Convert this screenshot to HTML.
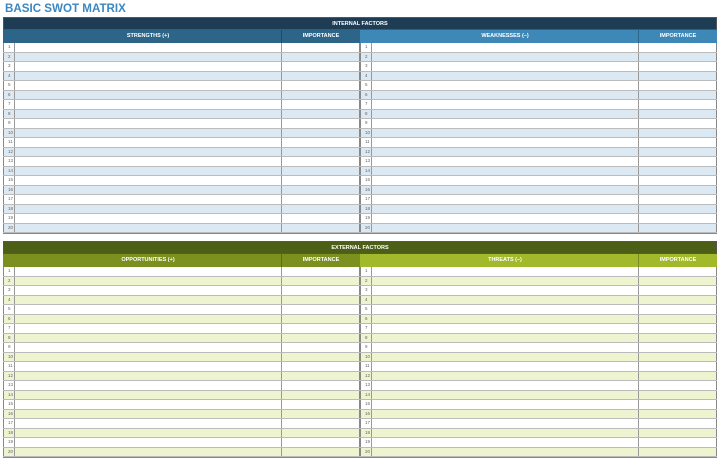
<!DOCTYPE html>
<html><head><meta charset="utf-8"><style>
*{margin:0;padding:0;box-sizing:border-box}
body{width:720px;height:462px;background:#fff;font-family:"Liberation Sans",Arial,sans-serif;position:relative;overflow:hidden}
h1{position:absolute;left:5px;top:2px;font-size:11.6px;color:#3b87c1;font-weight:bold}
.hdr{position:absolute;left:3px;width:714px;height:13px;color:#fff;font-size:5.5px;font-weight:bold;text-align:center;line-height:13px;border:1px solid #555}
.t{position:absolute;width:357px}
.sh{height:13px;display:flex;color:#fff;font-size:5.5px;font-weight:bold;line-height:13px;text-align:center}
.sh .a{flex:0 0 279px;border-right:1px solid rgba(0,0,0,.25)}
.sh .b{flex:1}
.r{height:9.5px;display:flex;border-bottom:1px solid #bbb;font-size:4.5px;color:#666;line-height:8.5px}
.r i{font-style:normal;flex:0 0 12px;border-left:1px solid #888;border-right:1px solid #999;padding-left:4px}
.r b{flex:0 0 267px;border-right:1px solid #999}
.r u{flex:1;border-right:1px solid #888}
.bl .r:nth-child(even){background:#dce9f3}
.gr .r:nth-child(even){background:#eef3d0}
.rows{border-bottom:1px solid #888}
</style></head><body>
<h1>BASIC SWOT MATRIX</h1>
<div class="hdr" style="top:17px;background:#1e3d55">INTERNAL FACTORS</div>
<div class="t" style="left:3px;top:30px"><div class="sh" style="background:#2c6587"><div class="a" style="flex-basis:279px;padding-left:12px">STRENGTHS (+)</div><div class="b">IMPORTANCE</div></div>
<div class="rows bl" id="a"><div class="r"><i>1</i><b></b><u></u></div><div class="r"><i>2</i><b></b><u></u></div><div class="r"><i>3</i><b></b><u></u></div><div class="r"><i>4</i><b></b><u></u></div><div class="r"><i>5</i><b></b><u></u></div><div class="r"><i>6</i><b></b><u></u></div><div class="r"><i>7</i><b></b><u></u></div><div class="r"><i>8</i><b></b><u></u></div><div class="r"><i>9</i><b></b><u></u></div><div class="r"><i>10</i><b></b><u></u></div><div class="r"><i>11</i><b></b><u></u></div><div class="r"><i>12</i><b></b><u></u></div><div class="r"><i>13</i><b></b><u></u></div><div class="r"><i>14</i><b></b><u></u></div><div class="r"><i>15</i><b></b><u></u></div><div class="r"><i>16</i><b></b><u></u></div><div class="r"><i>17</i><b></b><u></u></div><div class="r"><i>18</i><b></b><u></u></div><div class="r"><i>19</i><b></b><u></u></div><div class="r"><i>20</i><b></b><u></u></div></div></div>
<div class="t" style="left:360px;top:30px"><div class="sh" style="background:#3e88b8"><div class="a" style="padding-left:12px">WEAKNESSES (–)</div><div class="b">IMPORTANCE</div></div>
<div class="rows bl"><div class="r"><i>1</i><b></b><u></u></div><div class="r"><i>2</i><b></b><u></u></div><div class="r"><i>3</i><b></b><u></u></div><div class="r"><i>4</i><b></b><u></u></div><div class="r"><i>5</i><b></b><u></u></div><div class="r"><i>6</i><b></b><u></u></div><div class="r"><i>7</i><b></b><u></u></div><div class="r"><i>8</i><b></b><u></u></div><div class="r"><i>9</i><b></b><u></u></div><div class="r"><i>10</i><b></b><u></u></div><div class="r"><i>11</i><b></b><u></u></div><div class="r"><i>12</i><b></b><u></u></div><div class="r"><i>13</i><b></b><u></u></div><div class="r"><i>14</i><b></b><u></u></div><div class="r"><i>15</i><b></b><u></u></div><div class="r"><i>16</i><b></b><u></u></div><div class="r"><i>17</i><b></b><u></u></div><div class="r"><i>18</i><b></b><u></u></div><div class="r"><i>19</i><b></b><u></u></div><div class="r"><i>20</i><b></b><u></u></div></div></div>

<div class="hdr" style="top:241px;background:#4d5e17">EXTERNAL FACTORS</div>
<div class="t" style="left:3px;top:254px"><div class="sh" style="background:#7b901e"><div class="a" style="padding-left:12px">OPPORTUNITIES (+)</div><div class="b">IMPORTANCE</div></div>
<div class="rows gr"><div class="r"><i>1</i><b></b><u></u></div><div class="r"><i>2</i><b></b><u></u></div><div class="r"><i>3</i><b></b><u></u></div><div class="r"><i>4</i><b></b><u></u></div><div class="r"><i>5</i><b></b><u></u></div><div class="r"><i>6</i><b></b><u></u></div><div class="r"><i>7</i><b></b><u></u></div><div class="r"><i>8</i><b></b><u></u></div><div class="r"><i>9</i><b></b><u></u></div><div class="r"><i>10</i><b></b><u></u></div><div class="r"><i>11</i><b></b><u></u></div><div class="r"><i>12</i><b></b><u></u></div><div class="r"><i>13</i><b></b><u></u></div><div class="r"><i>14</i><b></b><u></u></div><div class="r"><i>15</i><b></b><u></u></div><div class="r"><i>16</i><b></b><u></u></div><div class="r"><i>17</i><b></b><u></u></div><div class="r"><i>18</i><b></b><u></u></div><div class="r"><i>19</i><b></b><u></u></div><div class="r"><i>20</i><b></b><u></u></div></div></div>
<div class="t" style="left:360px;top:254px"><div class="sh" style="background:#a2b92b"><div class="a" style="padding-left:12px">THREATS (–)</div><div class="b">IMPORTANCE</div></div>
<div class="rows gr"><div class="r"><i>1</i><b></b><u></u></div><div class="r"><i>2</i><b></b><u></u></div><div class="r"><i>3</i><b></b><u></u></div><div class="r"><i>4</i><b></b><u></u></div><div class="r"><i>5</i><b></b><u></u></div><div class="r"><i>6</i><b></b><u></u></div><div class="r"><i>7</i><b></b><u></u></div><div class="r"><i>8</i><b></b><u></u></div><div class="r"><i>9</i><b></b><u></u></div><div class="r"><i>10</i><b></b><u></u></div><div class="r"><i>11</i><b></b><u></u></div><div class="r"><i>12</i><b></b><u></u></div><div class="r"><i>13</i><b></b><u></u></div><div class="r"><i>14</i><b></b><u></u></div><div class="r"><i>15</i><b></b><u></u></div><div class="r"><i>16</i><b></b><u></u></div><div class="r"><i>17</i><b></b><u></u></div><div class="r"><i>18</i><b></b><u></u></div><div class="r"><i>19</i><b></b><u></u></div><div class="r"><i>20</i><b></b><u></u></div></div></div>
</body></html>
